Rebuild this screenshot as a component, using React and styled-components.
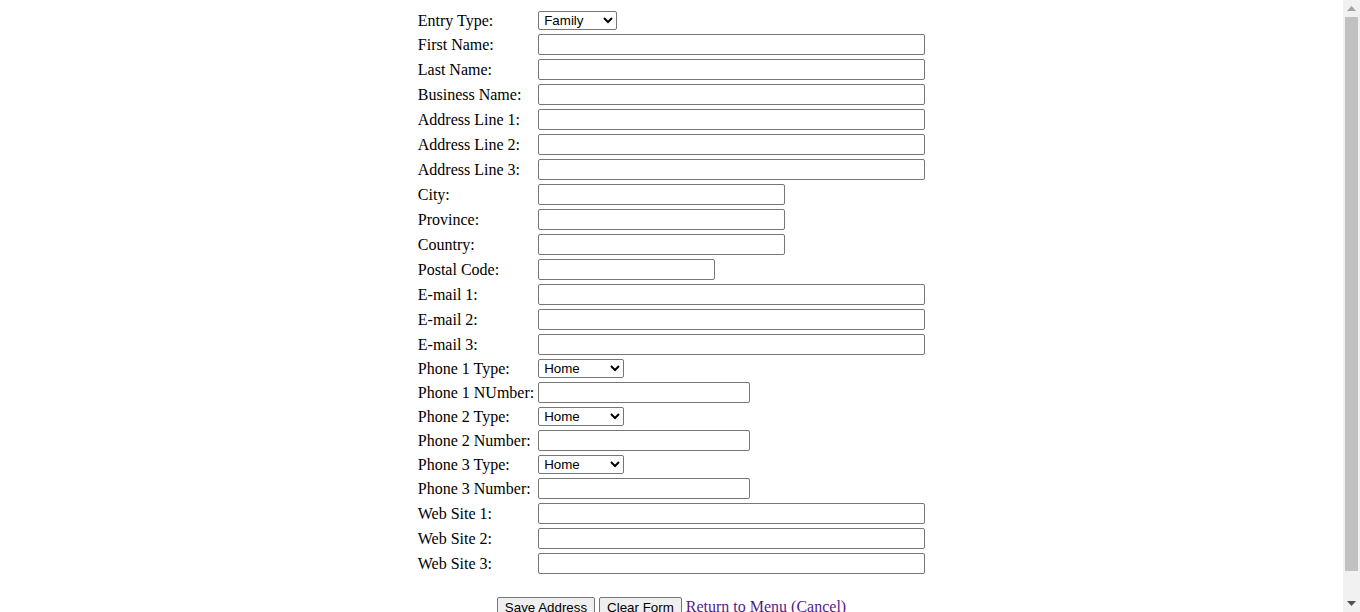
import React from "react";
import styled, { createGlobalStyle } from "styled-components";

const GlobalStyle = createGlobalStyle`
  body {
    margin: 8px 25px 8px 8px;
    background: #ffffff;
    color: #000000;
    font-family: "Liberation Serif", "Times New Roman", serif;
    font-size: 16px;
  }
`;

const fields = [
  { label: "Entry Type:", kind: "select", options: ["Family", "Friend", "Business"], width: 79 },
  { label: "First Name:", width: 387 },
  { label: "Last Name:", width: 387 },
  { label: "Business Name:", width: 387 },
  { label: "Address Line 1:", width: 387 },
  { label: "Address Line 2:", width: 387 },
  { label: "Address Line 3:", width: 387 },
  { label: "City:", width: 247 },
  { label: "Province:", width: 247 },
  { label: "Country:", width: 247 },
  { label: "Postal Code:", width: 177 },
  { label: "E-mail 1:", width: 387 },
  { label: "E-mail 2:", width: 387 },
  { label: "E-mail 3:", width: 387 },
  { label: "Phone 1 Type:", kind: "select", options: ["Home", "Work", "Cell", "Fax"], width: 86 },
  { label: "Phone 1 NUmber:", width: 212 },
  { label: "Phone 2 Type:", kind: "select", options: ["Home", "Work", "Cell", "Fax"], width: 86 },
  { label: "Phone 2 Number:", width: 212 },
  { label: "Phone 3 Type:", kind: "select", options: ["Home", "Work", "Cell", "Fax"], width: 86 },
  { label: "Phone 3 Number:", width: 212 },
  { label: "Web Site 1:", width: 387 },
  { label: "Web Site 2:", width: 387 },
  { label: "Web Site 3:", width: 387 },
];

function App() {
  return (
    <>
      <GlobalStyle />
      <FormTable>
        <tbody>
          {fields.map((f) => (
            <tr key={f.label}>
              <Label>{f.label}</Label>
              <Cell>
                {f.kind === "select" ? (
                  <Select $w={f.width} defaultValue={f.options[0]}>
                    {f.options.map((o) => (
                      <option key={o}>{o}</option>
                    ))}
                  </Select>
                ) : (
                  <TextInput type="text" $w={f.width} />
                )}
              </Cell>
            </tr>
          ))}
        </tbody>
      </FormTable>
      <Actions>
        <Button type="button">Save Address</Button>{" "}
        <Button type="button">Clear Form</Button>{" "}
        <MenuLink href="#menu">Return to Menu (Cancel)</MenuLink>
      </Actions>

      {/* browser scrollbar as it shows in the capture */}
      <ScrollBar>
        <Arrow>
          <svg width="9" height="5" viewBox="0 0 9 5">
            <path d="M0 5 L4.5 0 L9 5 Z" fill="#a3a3a3" />
          </svg>
        </Arrow>
        <Track>
          <Thumb />
        </Track>
        <Arrow>
          <svg width="9" height="5" viewBox="0 0 9 5">
            <path d="M0 0 L9 0 L4.5 5 Z" fill="#505050" />
          </svg>
        </Arrow>
      </ScrollBar>
    </>
  );
}

export default App;

const FormTable = styled.table`
  margin: 0 auto;
  border-spacing: 2px;
`;

const Label = styled.td`
  padding: 1px;
  white-space: nowrap;
  font-family: "Liberation Serif", "Times New Roman", serif;
  font-size: 16px;
`;

const Cell = styled.td`
  padding: 1px;
`;

const TextInput = styled.input`
  box-sizing: border-box;
  width: ${(p) => p.$w}px;
  height: 21px;
  margin: 0;
  padding: 1px 2px;
  border: 1px solid #767676;
  border-radius: 2px;
  font-family: "Liberation Sans", Arial, sans-serif;
  font-size: 13.333px;
  background: #ffffff;
  display: block;
`;

const Select = styled.select`
  box-sizing: border-box;
  width: ${(p) => p.$w}px;
  height: 19px;
  margin: 0;
  padding: 0 0 0 1px;
  border: 1px solid #767676;
  border-radius: 2px;
  font-family: "Liberation Sans", Arial, sans-serif;
  font-size: 13.333px;
  color: #000000;
  background: #ffffff;
  display: block;
`;

const Actions = styled.p`
  margin: 20px 0 16px;
  text-align: center;
`;

const Button = styled.button`
  font-family: "Liberation Sans", Arial, sans-serif;
  font-size: 13.333px;
  padding: 1px 7px;
  border: 1px solid #767676;
  border-radius: 2px;
  background: #efefef;
  color: #000000;
  height: 21px;
`;

const MenuLink = styled.a`
  color: #551a8b;
  text-decoration: none;
  font-family: "Liberation Serif", "Times New Roman", serif;
  font-size: 16px;
`;

const ScrollBar = styled.div`
  position: fixed;
  top: 0;
  right: 0;
  bottom: 0;
  width: 17px;
  background: #f1f1f1;
  display: flex;
  flex-direction: column;
`;

const Arrow = styled.div`
  height: 17px;
  flex: none;
  display: flex;
  align-items: center;
  justify-content: center;
`;

const Track = styled.div`
  flex: 1;
  padding: 0 2px;
`;

const Thumb = styled.div`
  height: 554px;
  background: #c1c1c1;
`;
